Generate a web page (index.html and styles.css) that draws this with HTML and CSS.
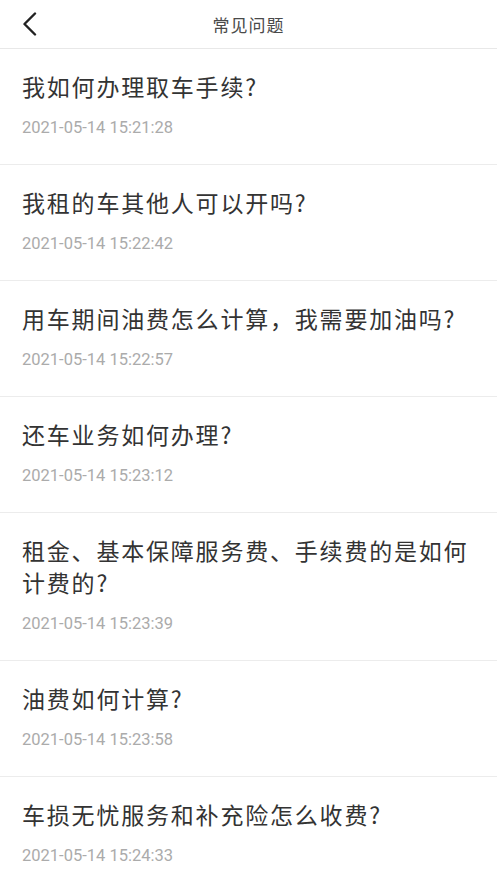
FILE: index.html
```html
<!DOCTYPE html>
<html>

<head>
    <title>常见问题</title>
    <meta charset="utf-8">
    <meta name="viewport" content="width=device-width, initial-scale=1.0">
    <link rel="stylesheet" href="styles.css">
</head>

<body>

    <header class="topbar">
        <button class="tilbage" aria-label="返回">
            <svg width="16" height="24" viewBox="0 0 16 24">
                <path d="M14 1.5 L3.5 12 L14 22.5" fill="none" stroke="#222" stroke-width="2.4" stroke-linecap="round" stroke-linejoin="round"/>
            </svg>
        </button>
        <h1>常见问题</h1>
    </header>

    <section id="liste">
        <article class="spg">
            <h2>我如何办理取车手续?</h2>
            <p class="dato">2021-05-14 15:21:28</p>
        </article>
        <article class="spg">
            <h2>我租的车其他人可以开吗?</h2>
            <p class="dato">2021-05-14 15:22:42</p>
        </article>
        <article class="spg">
            <h2>用车期间油费怎么计算，我需要加油吗?</h2>
            <p class="dato">2021-05-14 15:22:57</p>
        </article>
        <article class="spg">
            <h2>还车业务如何办理?</h2>
            <p class="dato">2021-05-14 15:23:12</p>
        </article>
        <article class="spg">
            <h2>租金、基本保障服务费、手续费的是如何计费的?</h2>
            <p class="dato">2021-05-14 15:23:39</p>
        </article>
        <article class="spg">
            <h2>油费如何计算?</h2>
            <p class="dato">2021-05-14 15:23:58</p>
        </article>
        <article class="spg">
            <h2>车损无忧服务和补充险怎么收费?</h2>
            <p class="dato">2021-05-14 15:24:33</p>
        </article>
    </section>

</body>

</html>
```

FILE: styles.css
```css
body {
    margin: 0;
    background: white;
    font-family: Roboto, "Noto Sans CJK SC", sans-serif;
    overflow: hidden;
}

.topbar {
    height: 48px;
    display: flex;
    align-items: center;
    justify-content: center;
    position: relative;
    border-bottom: 1px solid #e8e8e8;
}

.topbar h1 {
    margin: 0;
    font-size: 17px;
    font-weight: 400;
    color: #4a4a4a;
    letter-spacing: 1px;
}

.tilbage {
    position: absolute;
    left: 21px;
    top: 12px;
    padding: 0;
    border: none;
    background: none;
    line-height: 0;
}

.spg {
    padding: 21px 22px 26px 22px;
    border-bottom: 1px solid #ececec;
}

.spg h2 {
    margin: 0;
    font-family: "Noto Sans CJK SC", sans-serif;
    font-size: 23px;
    font-weight: 400;
    line-height: 32px;
    letter-spacing: 1.8px;
    color: #333;
}

.dato {
    margin: 16px 0 0 0;
    font-size: 16.5px;
    line-height: 20px;
    color: #ababab;
}
```
